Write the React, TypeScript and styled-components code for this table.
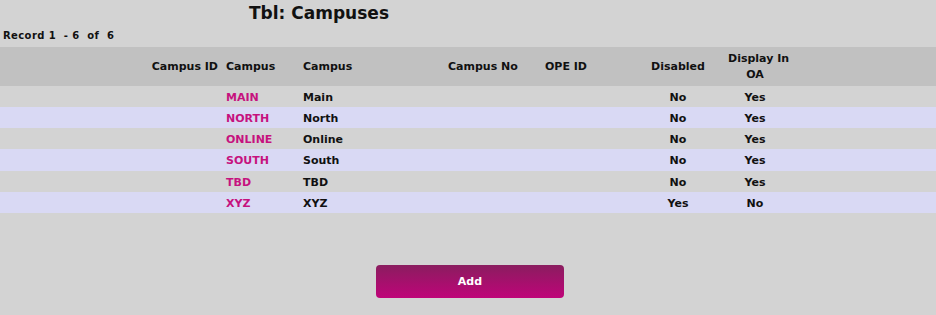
import styled, { createGlobalStyle } from 'styled-components';

const campuses = [
  { code: 'MAIN', name: 'Main', disabled: 'No', displayInOA: 'Yes' },
  { code: 'NORTH', name: 'North', disabled: 'No', displayInOA: 'Yes' },
  { code: 'ONLINE', name: 'Online', disabled: 'No', displayInOA: 'Yes' },
  { code: 'SOUTH', name: 'South', disabled: 'No', displayInOA: 'Yes' },
  { code: 'TBD', name: 'TBD', disabled: 'No', displayInOA: 'Yes' },
  { code: 'XYZ', name: 'XYZ', disabled: 'Yes', displayInOA: 'No' },
];

const GlobalStyle = createGlobalStyle`
  html, body {
    margin: 0;
    background: #d3d3d3;
  }
  body {
    font-family: 'DejaVu Sans', Verdana, sans-serif;
    color: #111;
  }
`;

function App() {
  return (
    <>
      <GlobalStyle />
      <Page>
        <Title>Tbl: Campuses</Title>
        <RecordCount>Record 1&nbsp; - 6&nbsp; of&nbsp; 6</RecordCount>
        <Table>
          <colgroup>
            <col style={{ width: 222 }} />
            <col style={{ width: 77 }} />
            <col style={{ width: 145 }} />
            <col style={{ width: 97 }} />
            <col style={{ width: 91 }} />
            <col style={{ width: 92 }} />
            <col style={{ width: 62 }} />
            <col />
          </colgroup>
          <thead>
            <HeadRow>
              <HeadCell $align="right">Campus ID</HeadCell>
              <HeadCell>Campus</HeadCell>
              <HeadCell>Campus</HeadCell>
              <HeadCell>Campus No</HeadCell>
              <HeadCell>OPE ID</HeadCell>
              <HeadCell $align="center">Disabled</HeadCell>
              <HeadCell $align="center">
                Display In
                <br />
                OA
              </HeadCell>
              <HeadCell />
            </HeadRow>
          </thead>
          <tbody>
            {campuses.map((c, i) => (
              <Row key={c.code} $striped={i % 2 === 1}>
                <Cell />
                <CodeCell>{c.code}</CodeCell>
                <Cell>{c.name}</Cell>
                <Cell />
                <Cell />
                <Cell $align="center">{c.disabled}</Cell>
                <Cell $align="center">{c.displayInOA}</Cell>
                <Cell />
              </Row>
            ))}
          </tbody>
        </Table>
        <Actions>
          <AddButton type="button">Add</AddButton>
        </Actions>
      </Page>
    </>
  );
}

const Page = styled.div`
  width: 936px;
  height: 315px;
  display: flex;
  flex-direction: column;
`;

const Title = styled.h1`
  margin: 0;
  padding-top: 1px;
  width: 638px;
  text-align: center;
  font-size: 17px;
  line-height: 24px;
  font-weight: bold;
  color: #111;
`;

const RecordCount = styled.div`
  padding: 5px 0 0 3px;
  height: 17px;
  font-size: 10px;
  font-weight: bold;
  line-height: 12px;
  letter-spacing: 0.4px;
`;

const Table = styled.table`
  width: 100%;
  border-collapse: collapse;
  table-layout: fixed;
`;

const HeadRow = styled.tr`
  background: #c1c1c1;
  height: 39px;
`;

const HeadCell = styled.th<{ $align?: 'left' | 'right' | 'center' }>`
  padding: 0 4px;
  text-align: ${(p) => p.$align ?? 'left'};
  font-size: 11px;
  line-height: 16px;
  font-weight: bold;
  vertical-align: middle;
  white-space: nowrap;
`;

const Row = styled.tr<{ $striped: boolean }>`
  height: 21px;
  background: ${(p) => (p.$striped ? '#d9d9f4' : '#d3d3d3')};

  &:nth-child(4) {
    height: 22px;
  }
`;

const Cell = styled.td<{ $align?: 'left' | 'center' }>`
  padding: 1px 4px 0;
  text-align: ${(p) => p.$align ?? 'left'};
  font-size: 11px;
  font-weight: bold;
  white-space: nowrap;
`;

const CodeCell = styled(Cell)`
  color: #c6127e;
`;

const Actions = styled.div`
  display: flex;
  justify-content: center;
  padding: 52px 0 0 4px;
`;

const AddButton = styled.button`
  width: 188px;
  height: 33px;
  border: none;
  border-radius: 4px;
  background: linear-gradient(to bottom, #8a1d5f, #bf0479);
  color: #fff;
  font-family: 'DejaVu Sans', Verdana, sans-serif;
  font-size: 11px;
  font-weight: bold;
  cursor: pointer;
`;

export default App;
